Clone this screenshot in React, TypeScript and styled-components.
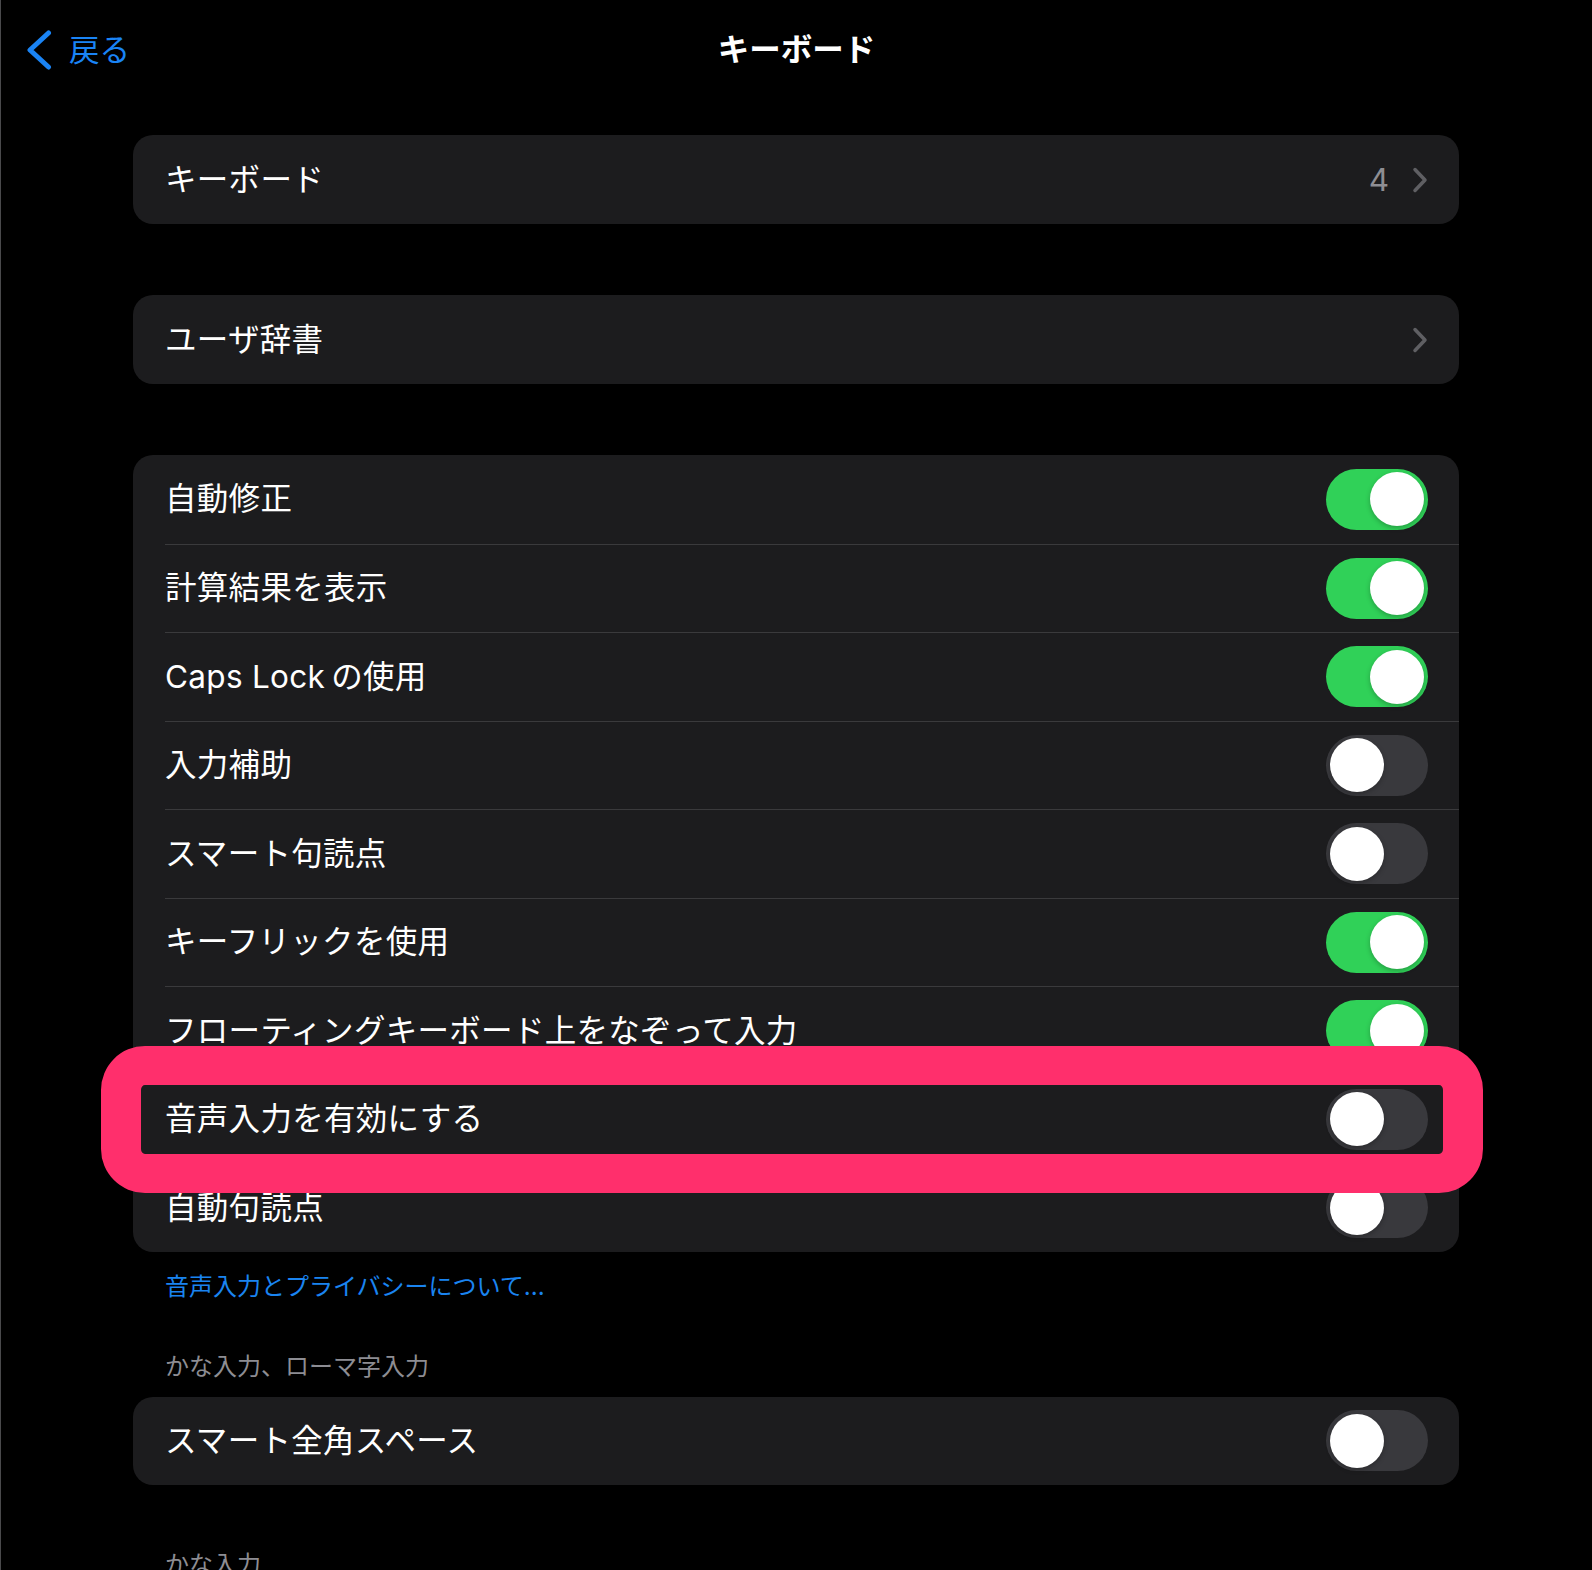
import React, { useState } from 'react';
import styled, { createGlobalStyle } from 'styled-components';

const GlobalStyle = createGlobalStyle`
  html, body {
    margin: 0;
    padding: 0;
    background: #000;
  }
  body {
    font-family: Inter, "Noto Sans CJK JP", "Noto Sans", sans-serif;
    -webkit-font-smoothing: antialiased;
  }
`;

const Screen = styled.div`
  box-sizing: border-box;
  width: 1592px;
  height: 1570px;
  overflow: hidden;
  background: #000;
  border-left: 1px solid #4a4a4c;
  color: #fff;
`;

const NavBar = styled.header`
  display: grid;
  grid-template-columns: 1fr auto 1fr;
  align-items: center;
  height: 100px;
`;

const BackButton = styled.button`
  display: flex;
  align-items: center;
  gap: 17px;
  justify-self: start;
  padding: 0 0 0 25px;
  border: none;
  background: none;
  color: #1a84f5;
  font-family: inherit;
  font-size: 30.5px;
  line-height: 40px;
  cursor: pointer;
`;

const NavTitle = styled.h1`
  margin: 0;
  font-size: 31.5px;
  font-weight: 700;
  line-height: 40px;
`;

const Content = styled.main`
  padding: 35px 133px 0 132px;
`;

const Card = styled.section<{ $gap?: number }>`
  position: relative;
  background: #1c1c1e;
  border-radius: 20px;
  padding-left: 32px;
  margin-bottom: ${p => (p.$gap ?? 0)}px;
`;

const Row = styled.div<{ $height?: number }>`
  position: relative;
  box-sizing: border-box;
  display: flex;
  align-items: center;
  justify-content: space-between;
  height: ${p => p.$height ?? 88.5}px;
  padding-right: 31px;

  & + & {
    border-top: 1px solid #3a3a3c;
  }
`;

const Label = styled.span`
  font-size: 31.5px;
  letter-spacing: 0.3px;
  line-height: 40px;
  color: #fff;
  white-space: nowrap;
`;

const Accessory = styled.div`
  display: flex;
  align-items: center;
  gap: 23px;
`;

const Value = styled.span`
  font-size: 31.5px;
  line-height: 40px;
  color: #8e8e93;
`;

const Track = styled.button<{ $on: boolean }>`
  position: relative;
  width: 102px;
  height: 61px;
  padding: 0;
  border: none;
  border-radius: 31px;
  background: ${p => (p.$on ? '#30d158' : '#39393d')};
  cursor: pointer;
  transition: background 0.2s;
`;

const Knob = styled.span<{ $on: boolean }>`
  position: absolute;
  top: 3.5px;
  left: 4px;
  width: 54px;
  height: 54px;
  border-radius: 50%;
  background: #fff;
  box-shadow: 0 2px 5px rgba(0, 0, 0, 0.25);
  transform: translateX(${p => (p.$on ? 40 : 0)}px);
  transition: transform 0.2s;
`;

const Footer = styled.a`
  display: block;
  margin: 19px 0 48px 32px;
  font-size: 24px;
  line-height: 32px;
  color: #1a84f0;
  text-decoration: none;
`;

const SectionHeader = styled.h2<{ $top?: number }>`
  margin: ${p => p.$top ?? 0}px 0 14px 32px;
  font-size: 24px;
  font-weight: 400;
  line-height: 32px;
  color: #8d8d93;
`;

// 注釈用のピンク枠
const Highlight = styled.div`
  position: absolute;
  top: -30px;
  bottom: -30px;
  left: -64px;
  right: -24px;
  border: 40px solid #ff2f6c;
  border-top-width: 39px;
  border-bottom-width: 39px;
  border-radius: 44px;
  pointer-events: none;
  z-index: 2;
`;

const ChevronRight = () => (
  <svg width="16" height="26" viewBox="0 0 16 26" fill="none">
    <path d="M3 2.5 L13 13 L3 23.5" stroke="#5f5f63" strokeWidth="3.5" strokeLinecap="round" strokeLinejoin="round" />
  </svg>
);

const ChevronLeft = () => (
  <svg width="26" height="40" viewBox="0 0 26 40" fill="none">
    <path d="M22.5 3 L4 20 L22.5 37" stroke="#1a84f5" strokeWidth="5" strokeLinecap="round" strokeLinejoin="round" />
  </svg>
);

const Toggle: React.FC<{ on: boolean; onChange: () => void }> = ({ on, onChange }) => (
  <Track $on={on} onClick={onChange} aria-pressed={on}>
    <Knob $on={on} />
  </Track>
);

const initialSwitches = [
  { label: '自動修正', on: true },
  { label: '計算結果を表示', on: true },
  { label: 'Caps Lock\u2009の使用', on: true },
  { label: '入力補助', on: false },
  { label: 'スマート句読点', on: false },
  { label: 'キーフリックを使用', on: true },
  { label: 'フローティングキーボード上をなぞって入力', on: true },
  { label: '音声入力を有効にする', on: false, highlight: true },
  { label: '自動句読点', on: false },
];

const App: React.FC = () => {
  const [switches, setSwitches] = useState(initialSwitches);
  const [smartSpace, setSmartSpace] = useState(false);

  const toggle = (index: number) => {
    setSwitches(prev => prev.map((s, i) => (i === index ? { ...s, on: !s.on } : s)));
  };

  return (
    <>
      <GlobalStyle />
      <Screen>
        <NavBar>
          <BackButton>
            <ChevronLeft />
            戻る
          </BackButton>
          <NavTitle>キーボード</NavTitle>
          <div />
        </NavBar>

        <Content>
          <Card $gap={71}>
            <Row $height={89}>
              <Label>キーボード</Label>
              <Accessory>
                <Value>4</Value>
                <ChevronRight />
              </Accessory>
            </Row>
          </Card>

          <Card $gap={71}>
            <Row $height={89}>
              <Label>ユーザ辞書</Label>
              <Accessory>
                <ChevronRight />
              </Accessory>
            </Row>
          </Card>

          <Card>
            {switches.map((s, i) => (
              <Row key={s.label}>
                <Label>{s.label}</Label>
                <Toggle on={s.on} onChange={() => toggle(i)} />
                {s.highlight && <Highlight />}
              </Row>
            ))}
          </Card>

          <Footer href="#">音声入力とプライバシーについて...</Footer>

          <SectionHeader>かな入力、ローマ字入力</SectionHeader>
          <Card>
            <Row $height={88}>
              <Label>スマート全角スペース</Label>
              <Toggle on={smartSpace} onChange={() => setSmartSpace(v => !v)} />
            </Row>
          </Card>

          <SectionHeader $top={64}>かな入力</SectionHeader>
        </Content>
      </Screen>
    </>
  );
};

export default App;
